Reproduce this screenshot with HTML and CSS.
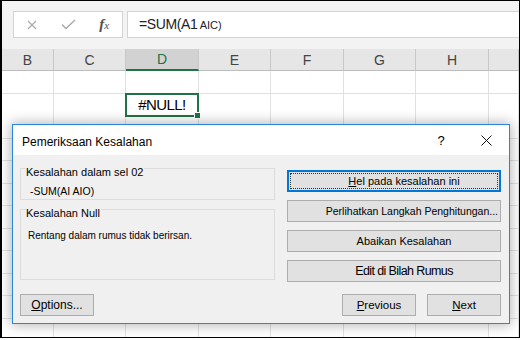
FILE: index.html
```html
<!DOCTYPE html>
<html lang="id">
<head>
    <meta charset="UTF-8">
    <title>Pemeriksaan Kesalahan</title>
    <link rel="stylesheet" href="styles.css">
</head>
<body>
    <div class="screen">
        <div class="formula-bar">
            <div class="fx-box">
                <span class="fx-slot slot-x">
                    <svg width="10" height="10" viewBox="0 0 10 10"><path d="M1 1 L9 9 M9 1 L1 9" stroke="#a9a9a9" stroke-width="1.2" fill="none"/></svg>
                </span>
                <span class="fx-slot">
                    <svg width="15" height="11" viewBox="0 0 15 11"><path d="M1 5.5 L5 9.5 L14 1" stroke="#a9a9a9" stroke-width="1.4" fill="none"/></svg>
                </span>
                <span class="fx-slot"><span class="fx"><i>f</i><span class="fx-x">x</span></span></span>
            </div>
            <div class="formula-input"><span class="f-main">=SUM(A1</span><span class="f-small"> AIC)</span></div>
        </div>

        <div class="sheet">
            <div class="row head">
                <div class="cell">B</div><div class="cell">C</div><div class="cell sel">D</div><div class="cell">E</div><div class="cell">F</div><div class="cell">G</div><div class="cell">H</div><div class="cell"></div>
            </div>
            <div class="row"><div class="cell"></div><div class="cell"></div><div class="cell"></div><div class="cell"></div><div class="cell"></div><div class="cell"></div><div class="cell"></div><div class="cell"></div></div>
            <div class="row"><div class="cell"></div><div class="cell"></div><div class="cell active">#NULL!<span class="sel-box"><span class="handle"></span></span></div><div class="cell"></div><div class="cell"></div><div class="cell"></div><div class="cell"></div><div class="cell"></div></div>
            <div class="row"><div class="cell"></div><div class="cell"></div><div class="cell"></div><div class="cell"></div><div class="cell"></div><div class="cell"></div><div class="cell"></div><div class="cell"></div></div>
            <div class="row"><div class="cell"></div><div class="cell"></div><div class="cell"></div><div class="cell"></div><div class="cell"></div><div class="cell"></div><div class="cell"></div><div class="cell"></div></div>
            <div class="row"><div class="cell"></div><div class="cell"></div><div class="cell"></div><div class="cell"></div><div class="cell"></div><div class="cell"></div><div class="cell"></div><div class="cell"></div></div>
            <div class="row"><div class="cell"></div><div class="cell"></div><div class="cell"></div><div class="cell"></div><div class="cell"></div><div class="cell"></div><div class="cell"></div><div class="cell"></div></div>
            <div class="row"><div class="cell"></div><div class="cell"></div><div class="cell"></div><div class="cell"></div><div class="cell"></div><div class="cell"></div><div class="cell"></div><div class="cell"></div></div>
            <div class="row"><div class="cell"></div><div class="cell"></div><div class="cell"></div><div class="cell"></div><div class="cell"></div><div class="cell"></div><div class="cell"></div><div class="cell"></div></div>
            <div class="row"><div class="cell"></div><div class="cell"></div><div class="cell"></div><div class="cell"></div><div class="cell"></div><div class="cell"></div><div class="cell"></div><div class="cell"></div></div>
            <div class="row"><div class="cell"></div><div class="cell"></div><div class="cell"></div><div class="cell"></div><div class="cell"></div><div class="cell"></div><div class="cell"></div><div class="cell"></div></div>
            <div class="row"><div class="cell"></div><div class="cell"></div><div class="cell"></div><div class="cell"></div><div class="cell"></div><div class="cell"></div><div class="cell"></div><div class="cell"></div></div>
            <div class="row"><div class="cell"></div><div class="cell"></div><div class="cell"></div><div class="cell"></div><div class="cell"></div><div class="cell"></div><div class="cell"></div><div class="cell"></div></div>
        </div>

        <div class="dialog">
            <div class="dlg-title">
                <span class="dlg-caption">Pemeriksaan Kesalahan</span>
                <span class="dlg-help">?</span>
                <span class="dlg-close">
                    <svg width="11" height="11" viewBox="0 0 11 11"><path d="M0.5 0.5 L10.5 10.5 M10.5 0.5 L0.5 10.5" stroke="#111" stroke-width="1" fill="none"/></svg>
                </span>
            </div>
            <div class="dlg-body">
                <div class="dlg-main">
                    <div class="dlg-left">
                        <div class="group group-cell">
                            <div class="group-title">Kesalahan dalam sel 02</div>
                            <div class="group-formula">-SUM(AI AIO)</div>
                        </div>
                        <div class="group group-desc">
                            <div class="group-title">Kesalahan Null</div>
                            <div class="group-text">Rentang dalam rumus tidak berirsan.</div>
                        </div>
                    </div>
                    <div class="dlg-right">
                        <div class="btn btn-side focused"><u>H</u>el pada kesalahan ini</div>
                        <div class="btn btn-side btn-long">Perlihatkan Langkah Penghitungan...</div>
                        <div class="btn btn-side">Abaikan Kesalahan</div>
                        <div class="btn btn-side btn-big">Edit di Bilah Rumus</div>
                    </div>
                </div>
                <div class="dlg-footer">
                    <div class="btn btn-foot"><u>O</u>ptions...</div>
                    <div class="foot-right">
                        <div class="btn btn-foot btn-nav"><u>P</u>revious</div>
                        <div class="btn btn-foot btn-nav"><u>N</u>ext</div>
                    </div>
                </div>
            </div>
        </div>
    </div>
</body>
</html>
```

FILE: styles.css
```css
:root {
    --excel-green: #217346;
    --grid-line: #e1e1e1;
    --header-bg: #e6e6e6;
    --dialog-bg: #f0f0f0;
    --button-bg: #e1e1e1;
    --button-border: #adadad;
    --focus-blue: #0078d7;
}

* {
    box-sizing: border-box;
    margin: 0;
    padding: 0;
}

body {
    width: 520px;
    height: 340px;
    overflow: hidden;
    background: #fff;
    color: #000;
    font-family: "Liberation Sans", Arial, sans-serif;
}

.screen {
    position: relative;
    width: 520px;
    height: 338px;
    border: 1px solid #000;
    border-left-width: 2px;
    background: #f3f3f3;
    overflow: hidden;
}

/* formula bar */

.formula-bar {
    display: flex;
    gap: 4px;
    height: 48px;
    padding: 10px 0 0 11px;
}

.fx-box {
    display: flex;
    align-items: center;
    width: 110px;
    height: 27px;
    background: #fff;
    border: 1px solid #d4d4d4;
}

.fx-slot {
    display: flex;
    align-items: center;
    justify-content: center;
    width: 36px;
    height: 100%;
}

.slot-x {
    width: 37px;
}

.fx {
    font-family: "Liberation Serif", serif;
    font-style: italic;
    font-size: 15px;
    color: #505050;
}

.fx i {
    font-weight: bold;
}

.fx-x {
    font-size: 11px;
}

.formula-input {
    flex: 1;
    height: 27px;
    margin-right: -1px;
    padding-left: 11px;
    background: #fff;
    border: 1px solid #d4d4d4;
    line-height: 24px;
    color: #222;
    white-space: nowrap;
}

.f-main {
    font-size: 14px;
    letter-spacing: -0.4px;
}

.f-small {
    font-size: 11px;
}

/* sheet grid */

.row {
    display: grid;
    grid-template-columns: 52px 72px 73px 72px 73px 72px 73px 1fr;
    height: 22.5px;
}

.cell {
    background: #fff;
    border-right: 1px solid var(--grid-line);
    border-bottom: 1px solid var(--grid-line);
}

.row.head {
    height: 22px;
}

.head .cell {
    display: flex;
    align-items: center;
    justify-content: center;
    background: var(--header-bg);
    border-right-color: #c8c8c8;
    border-bottom-color: #bdbdbd;
    font-size: 14px;
    color: #444;
}

.head .cell.sel {
    background: #d2d2d2;
    color: var(--excel-green);
    border-bottom: 2px solid var(--excel-green);
}

.cell.active {
    position: relative;
    text-align: center;
    font-size: 15px;
    letter-spacing: -0.6px;
    line-height: 22px;
}

.sel-box {
    position: absolute;
    top: -1px;
    left: -1px;
    right: -1px;
    bottom: -1px;
    border: 2px solid var(--excel-green);
}

.handle {
    position: absolute;
    right: -4px;
    bottom: -4px;
    width: 7px;
    height: 7px;
    background: var(--excel-green);
    border: 1px solid #fff;
}

/* dialog */

.dialog {
    position: absolute;
    left: 10px;
    top: 123px;
    width: 498px;
    height: 200px;
    display: flex;
    flex-direction: column;
    background: var(--dialog-bg);
    border: 1px solid #2a86d8;
    box-shadow: 0 0 12px 1px rgba(0, 0, 0, 0.3);
}

.dlg-title {
    display: flex;
    align-items: center;
    height: 30px;
    padding-left: 9px;
    background: #fff;
    font-size: 12px;
}

.dlg-caption {
    flex: 1;
    padding-top: 3px;
}

.dlg-help {
    width: 44px;
    text-align: center;
    font-size: 13px;
}

.dlg-close {
    display: flex;
    justify-content: center;
    width: 46px;
}

.dlg-body {
    flex: 1;
    padding: 13px 8px 7px 7px;
}

.dlg-main {
    display: flex;
    gap: 12px;
    height: 114px;
}

.dlg-left {
    width: 255px;
}

.group {
    border: 1px solid #dcdcdc;
}

.group-cell {
    height: 32px;
}

.group-desc {
    height: 71px;
    margin-top: 9px;
}

.group-title {
    width: max-content;
    margin: -3px 0 0 5px;
    padding-right: 1px;
    background: var(--dialog-bg);
    font-size: 11px;
    line-height: 13px;
}

.group-formula {
    margin: 6px 0 0 9px;
    font-size: 10.5px;
    line-height: 13px;
}

.group-text {
    margin: 9px 0 0 7px;
    font-size: 10px;
    line-height: 13px;
}

.dlg-right {
    display: flex;
    flex-direction: column;
    gap: 8px;
    width: 214px;
    padding-top: 2px;
}

.btn {
    position: relative;
    height: 22px;
    background: var(--button-bg);
    border: 1px solid var(--button-border);
    line-height: 20px;
    text-align: center;
    white-space: nowrap;
    overflow: hidden;
}

.btn-side {
    padding-left: 20px;
    font-size: 11px;
}

.btn-long {
    padding: 0 2px 0 0;
    text-align: right;
    font-size: 10.5px;
}

.btn-big {
    font-size: 12.5px;
    letter-spacing: -0.6px;
}

.btn.focused {
    border-color: var(--focus-blue);
    box-shadow: inset 0 0 0 1px var(--focus-blue);
}

.btn.focused::after {
    content: "";
    position: absolute;
    top: 2px;
    left: 2px;
    right: 2px;
    bottom: 2px;
    border: 1px dotted #333;
}

.dlg-footer {
    display: flex;
    justify-content: space-between;
    margin-top: 12px;
}

.foot-right {
    display: flex;
    gap: 11px;
}

.btn-foot {
    width: 74px;
    font-size: 12px;
}

.btn-nav {
    font-size: 11.5px;
}
```
